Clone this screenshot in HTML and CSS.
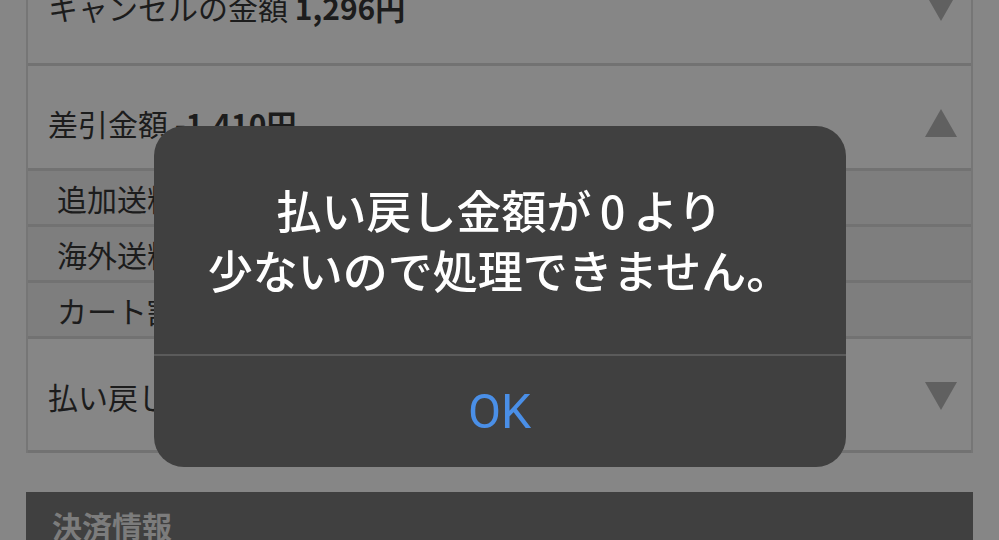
FILE: index.html
```html
<!DOCTYPE html>
<html lang="ja">
<head>
<meta charset="utf-8">
<title>払い戻し</title>
<link rel="stylesheet" href="styles.css">
</head>
<body>
<main class="page">
  <section class="panel">
    <div class="row row-cancel">
      <span class="row-text">キャンセルの金額 <b>1,296円</b></span>
      <svg class="tri" viewBox="0 0 32 28"><polygon points="0,0 32,0 16,28"/></svg>
    </div>
    <div class="row row-diff">
      <span class="row-text">差引金額 <b>-1,410円</b></span>
      <svg class="tri" viewBox="0 0 32 28"><polygon points="16,0 32,28 0,28"/></svg>
    </div>
    <div class="sub">追加送料 0円</div>
    <div class="sub">海外送料 0円</div>
    <div class="sub">カート割引 0円</div>
    <div class="row row-refund">
      <span class="row-text">払い戻し金額 <b>-114円</b></span>
      <svg class="tri" viewBox="0 0 32 28"><polygon points="0,0 32,0 16,28"/></svg>
    </div>
  </section>
  <h2 class="section-head">決済情報</h2>
</main>

<div class="overlay">
  <div class="alert" role="alertdialog">
    <p class="alert-msg">払い戻し金額が<span class="num">0</span>より<br>少ないので処理できません。</p>
    <button class="alert-btn">OK</button>
  </div>
</div>
</body>
</html>
```
FILE: styles.css
```css
html, body {
  margin: 0;
  padding: 0;
  height: 100%;
  overflow: hidden;
}
body {
  background: #868686;
  font-family: "Noto Sans CJK JP", "Noto Sans", sans-serif;
  color: #1c1c1c;
}
.page {
  padding-left: 26px;
  width: 947px;
}
.panel {
  margin-top: -52px;
  border: 2px solid #767676;
  border-bottom: none;
  background: #868686;
}
.row {
  display: flex;
  justify-content: space-between;
  align-items: flex-start;
  padding: 40px 14px 0 20px;
  border-bottom: 3px solid #727272;
  box-sizing: content-box;
}
.row-cancel { height: 73px; }
.row-diff { height: 62px; }
.row-refund { height: 71px; }
.row-text {
  font-size: 30px;
  line-height: 34px;
  white-space: nowrap;
}
.row-text b { font-weight: 700; }
.tri {
  width: 32px;
  height: 28px;
  margin-top: 3px;
  fill: #606060;
  flex: none;
}
.sub {
  height: 53px;
  display: flex;
  align-items: center;
  padding-left: 29px;
  font-size: 30px;
  background: #7e7e7e;
  border-bottom: 3px solid #727272;
  white-space: nowrap;
}
.section-head {
  margin: 39px 0 0;
  height: 60px;
  background: #404040;
  color: #7c7c7c;
  font-size: 30px;
  font-weight: 700;
  line-height: 40px;
  padding: 13px 0 0 26px;
  box-sizing: border-box;
}

.overlay {
  position: fixed;
  inset: 0;
  display: flex;
  justify-content: center;
  align-items: flex-start;
  padding-top: 126px;
}
.alert {
  width: 692px;
  height: 341px;
  background: #404040;
  border-radius: 30px;
  display: flex;
  flex-direction: column;
  overflow: hidden;
}
.alert-msg {
  margin: 0;
  padding: 54px 0 54px;
  text-align: center;
  color: #ffffff;
  font-size: 45px;
  font-weight: 500;
  line-height: 60px;
}
.num { padding: 0 8px; }
.alert-btn {
  flex: 1;
  border: none;
  border-top: 2px solid #5b5b5b;
  background: transparent;
  color: #4a8fe7;
  font-family: Roboto, "Liberation Sans", sans-serif;
  font-size: 48px;
  font-weight: 400;
  padding: 0;
  margin: 0;
  cursor: pointer;
}
```
